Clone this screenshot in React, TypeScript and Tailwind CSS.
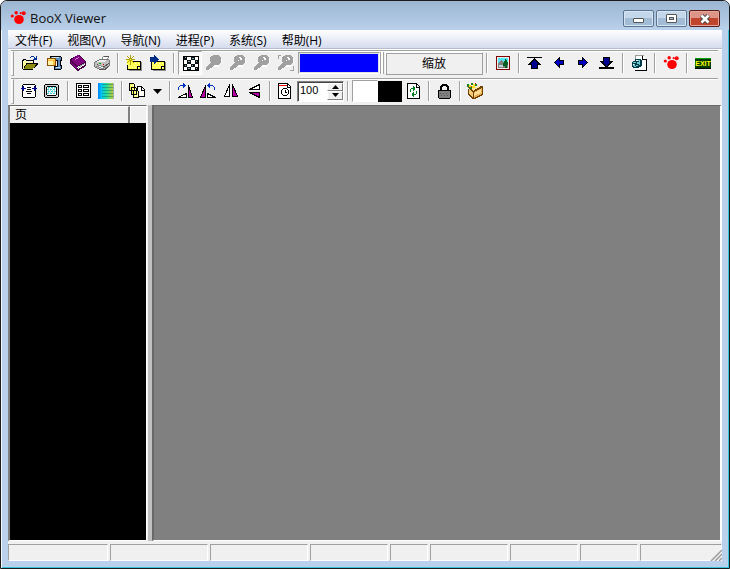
import { useState, type ReactNode } from 'react'

const menus = ['文件(F)', '视图(V)', '导航(N)', '进程(P)', '系统(S)', '帮助(H)']

const statusCells = [
  'w-[100px]',
  'w-[98px]',
  'w-[98px]',
  'w-[78px]',
  'w-[38px]',
  'w-[78px]',
  'w-[68px]',
  'w-[58px]',
  'min-w-0 flex-1',
]

function Icon({ children }: { children: ReactNode }) {
  return (
    <svg viewBox="0 0 16 16" className="block h-4 w-4 shrink-0" shapeRendering="crispEdges" fill="none" aria-hidden="true">
      {children}
    </svg>
  )
}

function Paw() {
  return (
    <Icon>
      <g fill="#f00" shapeRendering="auto">
        <ellipse cx="9" cy="9.5" rx="4.800" ry="4.500" />
        <circle cx="2.300" cy="6" r="1.600" />
        <circle cx="6.200" cy="2.800" r="1.700" />
        <circle cx="10.700" cy="3.200" r="1.100" />
        <circle cx="13.700" cy="3.200" r="2" />
      </g>
    </Icon>
  )
}

function OpenIcon() {
  return (
    <Icon>
      <path fill="#ffff9c" d="M1 6h4v1h6v3h-7l-3 4z" />
      <path fill="#8c8c10" d="M5 9h10l-4 5h-9z" />
      <path stroke="#000" d="M.5 14V5.500h1M1 4.500h3M4 5.500h7.500V8M4 8.500h11.500M1 14.500h10M1.500 13.500l3-4.500M11.500 13.500l4-4.500" />
      <path stroke="#003399" d="M8 2.500h1M9 1.500h3M12 2.500h1M14.500 1v4M11 4.500h4M12 3.500h3" />
    </Icon>
  )
}

function ZipIcon() {
  return (
    <Icon>
      <path fill="#000" d="M4 1h11v1h1v4h-1v4h1v4h-1v1h-7v-4h3v-5h-3v-2h-4z" />
      <path fill="#5c8cc0" d="M5 2h10v3h-1v6h1v3h-6v-2h3v-7h-3v-1h-4z" />
      <path stroke="#c4e0f4" d="M6 2.500h7M10 12.500h4" />
      <path fill="#ffc040" stroke="#885000" d="M1.500 3.500h8v7h-8z" />
      <path fill="#fff4a8" d="M2 6h5v4h-5z" />
      <path fill="#ffdc70" d="M2 4h6v1h-6z" />
    </Icon>
  )
}

function BookIcon() {
  return (
    <Icon>
      <path fill="#480048" d="M8 0h1l7 7v4l-8 5h-1l-7-7v-5z" />
      <path fill="#fff" d="M7 12l8-4v2l-7 4z" />
      <path stroke="#aaa" d="M8 12.500l7-4" />
      <path fill="#800080" d="M8 0l7 7-8 4-6-6z" />
      <path fill="#800080" d="M1 7l6 6v2l-6-6z" />
      <path stroke="#d080d0" d="M5 4.500h1M6 3.500h2M8 2.500h1" />
    </Icon>
  )
}

function PrinterIcon() {
  return (
    <Icon>
      <path fill="#fff" stroke="#888" d="M6.500 6.500l3-5h5l-2 5z" />
      <path fill="#c0c0c0" stroke="#777" d="M.5 7.500l5-3h9l1 1v5l-5 4h-5l-5-3z" />
      <path fill="#eee" d="M2 7h8l3-2h-7z" />
      <path stroke="#555" d="M3 9.500l4 2h3l5-3M5 14.500h6l4-3M10 1.500h5" />
      <path fill="#fff" stroke="#888" d="M3.500 11.500l2-1 5 2-2 1z" />
      <path fill="#0a0" d="M5 8h2v1h-2z" />
      <path fill="#d00" d="M9 9h1v1h-1z" />
    </Icon>
  )
}

function Note() {
  return (
    <>
      <path fill="#909090" d="M15 7h1v9h-13v-1h12z" />
      <path fill="#ffff50" stroke="#000" d="M1.500 6.500h13v8h-13z" />
      <path stroke="#ffffc0" strokeDasharray="1 2" d="M3 8.500h10M2 10.500h10M3 12.500h8" />
      <path fill="#fff" stroke="#000" d="M11.500 13.500v-2h2" />
    </>
  )
}

function NewIcon() {
  return (
    <Icon>
      <Note />
      <path fill="#ffff50" d="M1 5h6v5h-6z" />
      <path stroke="#b0a000" d="M4.500 0v3M4.500 6v4M0 4.500h3M6 4.500h3M1 1.500h1M2 2.500h1M7 1.500h1M6 2.500h1M2 6.500h1M1 7.500h1M6 6.500h1M7 7.500h1" />
      <path fill="#ffff50" stroke="#b0a000" d="M3.500 3.500h2v2h-2z" />
    </Icon>
  )
}

function MoveIcon() {
  return (
    <Icon>
      <Note />
      <path fill="#002c88" d="M0 2h4v-2h1v1h1v1h1v1h1v1h1v1h-1v1h-1v1h-1v1h-1v1h-1v-2h-4z" />
    </Icon>
  )
}

function CheckerIcon() {
  return (
    <Icon>
      <path fill="#fff" stroke="#000" d="M.5 1.500h15v14h-15z" />
      <path
        fill="#101010"
        d="M1 2h3v3h-3zM8 2h4v3h-4zM4 5h4v4h-4zM12 5h3v4h-3zM1 9h3v3h-3zM8 9h4v3h-4zM4 12h4v3h-4zM12 12h3v3h-3z"
      />
      <path fill="#70a8c0" d="M2 2h1v1h-1zM9 3h2v1h-2zM5 6h2v1h-2zM13 6h1v1h-1zM2 10h1v1h-1zM9 10h1v1h-1zM5 13h2v1h-2zM13 13h1v1h-1z" />
    </Icon>
  )
}

function LensIcon({ detail, frame }: { detail?: boolean; frame?: boolean }) {
  return (
    <Icon>
      <path stroke="#fff" strokeWidth="2" d="M15 4v4M8 11h5M5 13l-3 2" />
      <path
        fill="#a0a0a0"
        d="M7 0h6v1h1v1h1v6h-1v1h-1v1h-5v1h-1v1h-1v1h-2v1h-1v1h-3v-3h1v-1h1v-1h1v-1h1v-1h1v-1h-1v-5h1v-1h1z"
      />
      {detail && <path fill="#fff" d="M9 2h2v1h1v2h-2v-2h-1zM8 5h1v1h-1z" />}
      {frame && <path stroke="#a0a0a0" d="M0 .500h3M.5 0v4M15.500 11v5M12 15.500h4" />}
    </Icon>
  )
}

function PictureIcon() {
  return (
    <Icon>
      <path fill="#efefef" stroke="#800000" d="M1.500 1.500h13v13h-13z" />
      <path fill="#50e4f4" d="M3 3h10v5h-10z" />
      <path fill="#808080" d="M3 8l3-3 3 3 4-1v6h-10z" />
      <path fill="#b8d8dc" d="M4 10h4v2h-4z" />
      <path fill="#006020" d="M10 4h1v1h1v2h1v3h-1v3h-2v-2h-2v-3h1v-2h1z" />
    </Icon>
  )
}

function FirstIcon() {
  return (
    <Icon>
      <path fill="#000" d="M0 2h15v1h-15z" />
      <path fill="#000" d="M7 3h1v1h1v1h1v1h1v1h1v1h1v1h1v1h-3v4h-7v-4h-3v-1h1v-1h1v-1h1v-1h1v-1h1v-1h1z" />
      <path fill="#000090" d="M7 5h1v1h1v1h1v1h1v1h-1v4h-5v-4h-1v-1h1v-1h1v-1h1z" />
    </Icon>
  )
}

function LastIcon() {
  return (
    <Icon>
      <path fill="#000" d="M0 12h15v2h-15z" />
      <path fill="#000" d="M4 2h7v4h3v1h-1v1h-1v1h-1v1h-1v1h-1v1h-3v-1h-1v-1h-1v-1h-1v-1h-1v-1h-1v-1h3z" />
      <path fill="#000090" d="M5 3h5v4h1v1h-1v1h-1v1h-1v1h-1v-1h-1v-1h-1v-1h-1v-1h1z" />
    </Icon>
  )
}

function PrevIcon() {
  return (
    <Icon>
      <path fill="#000" d="M3 7h1v-1h1v-1h1v-1h1v-1h1v-1h1v3h4v5h-4v3h-1v-1h-1v-1h-1v-1h-1v-1h-1v-1h-1z" />
      <path fill="#0000c0" d="M4 7h1v-1h1v-1h1v-1h1v2h4v3h-4v2h-1v-1h-1v-1h-1v-1h-1z" />
    </Icon>
  )
}

function NextIcon() {
  return (
    <Icon>
      <path fill="#000" d="M13 7h-1v-1h-1v-1h-1v-1h-1v-1h-1v-1h-1v3h-4v5h4v3h1v-1h1v-1h1v-1h1v-1h1v-1h1z" />
      <path fill="#0000c0" d="M12 7h-1v-1h-1v-1h-1v-1h-1v2h-4v3h4v2h1v-1h1v-1h1v-1h1z" />
    </Icon>
  )
}

function PageOutIcon() {
  return (
    <Icon>
      <path fill="#fff" d="M4 1h8l3 3v11h-11z" />
      <path stroke="#999" d="M4.500 4v-3.500h8" />
      <path stroke="#000" d="M11.500 1v3.500h3.500M15.500 4v11.500h-11.500" />
      <path fill="#003c48" d="M4 4h6v1h1v6h-1v1h-2v1h-6v-1h-1v-5h1v-1h2z" />
      <path fill="#70ccd4" d="M5 5h4v1h-4zM2 7h3v1h-3zM6 7h2v2h-2zM2 9h2v2h-2zM5 10h2v1h-2zM8 6h1v4h-1zM3 11h2v1h-2z" />
      <path fill="#fff" d="M5 5h2v1h-2zM2 9h1v1h-1z" />
    </Icon>
  )
}

function ExitIcon() {
  return (
    <span className="flex h-[11px] w-4 shrink-0 items-center justify-center border-y border-[#00a000] border-b-black bg-[#003c00] font-['Liberation_Sans',sans-serif] text-[7px] leading-[9px] font-bold text-[#ff0]">
      EXIT
    </span>
  )
}

function FitWidthIcon() {
  return (
    <Icon>
      <path fill="#fff" stroke="#000" d="M1.500 2.500l1-1h11l1 1v11l-1 1h-11l-1-1z" />
      <path stroke="#000" d="M6 4.500h4M6 6.500h4M5 8.500h6M6 10.500h4" />
      <path fill="#fff" d="M2 3h2v5h-2zM12 3h2v5h-2z" />
      <path fill="#000090" d="M0 5h1v-1h1v-1h1v2h2v1h-2v2h-1v-1h-1v-1h-1zM16 5h-1v-1h-1v-1h-1v2h-2v1h2v2h1v-1h1v-1h1z" />
    </Icon>
  )
}

function FitPageIcon() {
  return (
    <Icon>
      <path fill="#d0d0d0" stroke="#000" d="M.5 2.500l1-1h12l1 1v11l-1 1h-12l-1-1z" />
      <path fill="#fff" stroke="#000" d="M2.500 4.500l1-1h8l1 1v7l-1 1h-8l-1-1z" />
      <path stroke="#40c8d0" strokeDasharray="2 1" d="M4 4.500h8M3 6.500h9M4 8.500h8M3 10.500h9" />
      <path stroke="#a0e4e8" strokeDasharray="1 1" d="M4 5.500h8M4 7.500h8M4 9.500h8" />
    </Icon>
  )
}

function DetailsIcon() {
  return (
    <Icon>
      <path fill="#fff" stroke="#000" d="M1.500 .500h14v14h-14z" />
      <path stroke="#000" d="M3.500 2.500h3v2h-3zM3.500 6.500h3v2h-3zM3.500 10.500h3v2h-3zM8.500 2.500h5v2h-5zM8.500 6.500h5v2h-5zM8.500 10.500h5v2h-5z" />
    </Icon>
  )
}

function GradientIcon() {
  return (
    <Icon>
      <defs>
        <linearGradient id="bands">
          <stop offset="0" stopColor="#0080ff" />
          <stop offset=".25" stopColor="#00c8f0" />
          <stop offset=".6" stopColor="#30e090" />
          <stop offset="1" stopColor="#c8c838" />
        </linearGradient>
      </defs>
      <path fill="url(#bands)" d="M0 0h15v16h-15z" />
      <path stroke="#006060" strokeOpacity=".4" d="M4 1.500h12M4 4.500h12M4 7.500h12M4 10.500h12M4 13.500h12M15.500 0v16" />
    </Icon>
  )
}

function PagesIcon() {
  return (
    <Icon>
      <path fill="#fff" stroke="#000" d="M8.500 3.500h4l3 3v7h-7z" />
      <path stroke="#000" d="M12.500 4v3h3" />
      <path fill="#ffff60" stroke="#000" d="M.5 .500h4l1 1v6h-5zM2.500 4.500h4l1 1v6h-5zM4.500 7.500h4l1 1v6h-5z" />
      <path stroke="#fff" strokeDasharray="1 1" d="M2 2.500h3M4 6.500h3M6 9.500h3M6 12.500h3" />
    </Icon>
  )
}

function RotateRightIcon() {
  return (
    <Icon>
      <path fill="#fff" stroke="#000" d="M1 14.500h8.500V10.500z" />
      <path fill="#b800a8" stroke="#000" d="M11.500 2.500v12h4z" />
      <path stroke="#0030c0" d="M1.500 7v-3M2 3.500h1M3 2.500h4M6.500 0v5M7.500 1v3M8.500 2v1" />
    </Icon>
  )
}

function RotateLeftIcon() {
  return (
    <Icon>
      <path fill="#b800a8" stroke="#000" d="M5.500 2.500v12h-5z" />
      <path fill="#fff" stroke="#000" d="M7.500 10.500v4h8z" />
      <path stroke="#0030c0" d="M14.500 7v-3M13 3.500h1M9 2.500h4M9.500 0v5M8.500 1v3M7.500 2v1" />
    </Icon>
  )
}

function FlipHIcon() {
  return (
    <Icon>
      <path fill="#fff" stroke="#000" d="M6.500 1.500v12h-5z" />
      <path fill="#b800a8" stroke="#000" d="M9.500 1.500v12h5z" />
    </Icon>
  )
}

function FlipVIcon() {
  return (
    <Icon>
      <path fill="#fff" stroke="#000" d="M13.500 1.500v5h-10z" />
      <path fill="#b800a8" stroke="#000" d="M3.500 9.500h10v5z" />
    </Icon>
  )
}

function TimerIcon() {
  return (
    <Icon>
      <path fill="#fff" stroke="#000" d="M1.500 .500h9l3 3v12h-12z" />
      <path stroke="#f00" d="M2 2.500h8" />
      <path stroke="#000" d="M10.500 1v3h3M6 5.500h4M10 6.500h1M11.500 7v4M10 11.500h1M6 12.500h4M5 11.500h1M4.500 7v4M5 6.500h1M8.500 7v3M8 9.500h2" />
    </Icon>
  )
}

function RefreshIcon() {
  return (
    <Icon>
      <path fill="#fff" stroke="#000" d="M2.500 .500h9l3 3v12h-12z" />
      <path stroke="#000" d="M11.500 1v3h3" />
      <path stroke="#008020" d="M5.500 9v-3M6 5.500h3M8.500 3v5M9.500 4v3M11.500 8v3M8 11.500h3M8.500 9v5M7.500 10v3" />
    </Icon>
  )
}

function LockIcon() {
  return (
    <Icon>
      <path stroke="#000" strokeWidth="2" d="M5 8v-4l1.500-2h4l1.500 2v4" />
      <path fill="#808080" stroke="#000" d="M2.500 7.500h12v7l-1 1h-10l-1-1z" />
      <path stroke="#555" strokeDasharray="1 2" d="M4 10.500h9M5 12.500h8" />
    </Icon>
  )
}

function BoxIcon() {
  return (
    <Icon>
      <path fill="#704000" d="M2 5h4l7-2h2l1 1v7l-2 2-6 3h-3l-4-4v-6z" />
      <path fill="#f4cc78" d="M2 6l4 4v5l-4-4z" />
      <path fill="#ffe4a0" d="M4 6l8-3h2l-8 5z" />
      <path fill="#e8b050" d="M7 9l8-4v5l-2 2-6 3z" />
      <path fill="#ffdc98" d="M7 10l7-4v4l-7 3z" />
      <path fill="#208020" d="M0 1h2v3h-2zM4 0h2v2h-2zM8 1h2v2h-2zM2 4h3v2h-3z" />
      <path fill="#ffe020" d="M2 2h2v2h-2zM6 1h2v2h-2zM5 3h3v2h-3z" />
      <path fill="#e02010" d="M1 4h1v1h-1zM4 3h1v1h-1zM8 0h1v1h-1z" />
    </Icon>
  )
}

function ToolButton({ label, children, pressed, compact }: { label: string; children: ReactNode; pressed?: boolean; compact?: boolean }) {
  const size = compact ? 'w-[23px] pl-[3px]' : 'w-6 pl-1'
  const edge = pressed ? 'border border-[#a0a0a0] border-r-white border-b-white bg-[#f7f7f7]' : ''
  return (
    <button type="button" aria-label={label} title={label} className={`flex h-6 shrink-0 items-center ${size} ${edge}`}>
      {children}
    </button>
  )
}

function Separator() {
  return (
    <div className="flex w-2 shrink-0 justify-center">
      <div className="h-5 w-[2px] border-r border-l border-r-white border-l-[#a0a0a0]" />
    </div>
  )
}

function Grip() {
  return <div className="mr-1 h-[25px] w-[3px] shrink-0 border border-t-white border-r-[#a0a0a0] border-b-[#a0a0a0] border-l-white" />
}

function TitleBar() {
  return (
    <header className="flex h-[29px] shrink-0 items-start justify-between bg-linear-to-b from-[#9cb5d1] to-[#b9d1ea] pl-[9px]">
      <div className="flex items-center gap-1 pt-[9px]">
        <Paw />
        <h1 className="text-[13px] leading-4 text-[#111]">BooX Viewer</h1>
      </div>
      <div className="mt-[9px] mr-[9px] flex gap-[2px]">
        <button type="button" aria-label="Minimize" className="flex h-[17px] w-[31px] items-center justify-center rounded-[2px] border border-[#5a7390] bg-linear-to-b from-[#c3d6ea] from-50% to-[#a3bcd6] to-50% shadow-[inset_0_0_0_1px_#d8e6f4]">
          <span className="mt-1 h-[5px] w-[11px] rounded-[1px] border border-[#555] bg-white" />
        </button>
        <button type="button" aria-label="Maximize" className="flex h-[17px] w-[31px] items-center justify-center rounded-[2px] border border-[#5a7390] bg-linear-to-b from-[#c3d6ea] from-50% to-[#a3bcd6] to-50% shadow-[inset_0_0_0_1px_#d8e6f4]">
          <span className="flex h-[9px] w-[11px] items-center justify-center rounded-[1px] border border-[#555] bg-white">
            <span className="h-[3px] w-[5px] border border-[#555] bg-[#a3bcd6]" />
          </span>
        </button>
        <button type="button" aria-label="Close" className="flex h-[17px] w-[31px] items-center justify-center rounded-[2px] border border-[#5b1d17] bg-linear-to-b from-[#dd9587] from-50% to-[#c0452c] to-50% shadow-[inset_0_0_0_1px_#e5a79b]">
          <svg viewBox="0 0 12 10" className="h-[10px] w-3" aria-hidden="true">
            <path stroke="#444" strokeWidth="4.500" d="M2.500 1.500l7 7M9.500 1.500l-7 7" />
            <path stroke="#fff" strokeWidth="2.600" d="M2.500 1.500l7 7M9.500 1.500l-7 7" />
          </svg>
        </button>
      </div>
    </header>
  )
}

function MainToolbar() {
  return (
    <div role="toolbar" aria-label="Main" className="flex h-[27px] items-start overflow-hidden">
      <Grip />
      <div className="flex min-w-0 flex-1 items-center shadow-[inset_0_1px_0_#fff]">
        <ToolButton label="Open"><OpenIcon /></ToolButton>
        <ToolButton label="Archive"><ZipIcon /></ToolButton>
        <ToolButton label="Book"><BookIcon /></ToolButton>
        <ToolButton label="Print"><PrinterIcon /></ToolButton>
        <Separator />
        <ToolButton label="New note"><NewIcon /></ToolButton>
        <ToolButton label="Go to note"><MoveIcon /></ToolButton>
        <Separator />
        <ToolButton label="Background" pressed><CheckerIcon /></ToolButton>
        <ToolButton label="Lens"><LensIcon /></ToolButton>
        <ToolButton label="Zoom in"><LensIcon detail /></ToolButton>
        <ToolButton label="Zoom out"><LensIcon detail /></ToolButton>
        <ToolButton label="Zoom area"><LensIcon detail frame /></ToolButton>
        <button type="button" aria-label="Colour" className="h-[22px] w-[82px] shrink-0 border border-[#a0a0a0] border-r-white border-b-white bg-[#00f] shadow-[inset_0_0_0_1px_#e0e0e0]" />
        <div className="mr-[1px] h-[22px] w-1 shrink-0 border-r border-l border-[#a0a0a0] bg-white" />
        <button type="button" className="h-[23px] w-[98px] shrink-0 border border-[#a0a0a0] border-t-white border-l-white pt-[2px] text-[12px] leading-4 shadow-[inset_1px_1px_0_#a0a0a0]">
          缩放
        </button>
        <Separator />
        <ToolButton label="Picture"><PictureIcon /></ToolButton>
        <Separator />
        <ToolButton label="First page"><FirstIcon /></ToolButton>
        <ToolButton label="Previous page"><PrevIcon /></ToolButton>
        <ToolButton label="Next page"><NextIcon /></ToolButton>
        <ToolButton label="Last page"><LastIcon /></ToolButton>
        <Separator />
        <ToolButton label="Export page"><PageOutIcon /></ToolButton>
        <Separator />
        <ToolButton label="About"><Paw /></ToolButton>
        <Separator />
        <ToolButton label="Exit"><ExitIcon /></ToolButton>
      </div>
    </div>
  )
}

function ViewToolbar() {
  const [delay, setDelay] = useState(100)

  return (
    <div role="toolbar" aria-label="View" className="flex h-[26px] items-start">
      <Grip />
      <div className="flex min-w-0 flex-1 items-center shadow-[inset_0_1px_0_#fff]">
        <ToolButton label="Fit width" compact><FitWidthIcon /></ToolButton>
        <ToolButton label="Fit page" compact><FitPageIcon /></ToolButton>
        <Separator />
        <ToolButton label="Details" compact><DetailsIcon /></ToolButton>
        <ToolButton label="Gradient" compact><GradientIcon /></ToolButton>
        <Separator />
        <ToolButton label="Pages" compact><PagesIcon /></ToolButton>
        <button type="button" aria-label="More pages" className="flex h-6 w-[17px] shrink-0 items-center justify-center">
          <svg viewBox="0 0 9 5" className="h-[5px] w-[9px]" aria-hidden="true">
            <path d="M0 0h9l-4.500 5z" />
          </svg>
        </button>
        <Separator />
        <ToolButton label="Rotate right" compact><RotateRightIcon /></ToolButton>
        <ToolButton label="Rotate left" compact><RotateLeftIcon /></ToolButton>
        <ToolButton label="Flip horizontal" compact><FlipHIcon /></ToolButton>
        <ToolButton label="Flip vertical" compact><FlipVIcon /></ToolButton>
        <Separator />
        <ToolButton label="Timer" compact><TimerIcon /></ToolButton>
        <div className="flex h-[21px] w-[47px] shrink-0 border border-[#808080] border-r-white border-b-white bg-white shadow-[inset_1px_1px_0_#444]">
          <input
            aria-label="Delay"
            value={delay}
            onChange={(e) => setDelay(Number(e.target.value) || 0)}
            className="h-4 w-[29px] min-w-0 bg-transparent pl-[2px] font-['Liberation_Sans',sans-serif] text-[11px] leading-4 outline-none"
          />
          <div className="flex flex-1 flex-col py-[1px]">
            <button type="button" aria-label="Increase" onClick={() => setDelay(delay + 1)} className="flex flex-1 items-center justify-center border border-white border-r-[#808080] border-b-[#808080] bg-[#f0f0f0]">
              <svg viewBox="0 0 7 4" className="h-1 w-[7px]" aria-hidden="true"><path d="M0 4h7l-3.500-4z" /></svg>
            </button>
            <button type="button" aria-label="Decrease" onClick={() => setDelay(delay - 1)} className="flex flex-1 items-center justify-center border border-white border-r-[#808080] border-b-[#808080] bg-[#f0f0f0]">
              <svg viewBox="0 0 7 4" className="h-1 w-[7px]" aria-hidden="true"><path d="M0 0h7l-3.500 4z" /></svg>
            </button>
          </div>
        </div>
        <Separator />
        <button type="button" aria-label="Foreground" className="h-[22px] w-[26px] shrink-0 border border-[#a0a0a0] border-r-white border-b-white bg-white" />
        <button type="button" aria-label="Background" className="h-[21px] w-6 shrink-0 bg-black" />
        <ToolButton label="Refresh" compact><RefreshIcon /></ToolButton>
        <Separator />
        <ToolButton label="Lock" compact><LockIcon /></ToolButton>
        <Separator />
        <ToolButton label="Pack" compact><BoxIcon /></ToolButton>
      </div>
    </div>
  )
}

export default function App() {
  return (
    <div className="h-screen bg-white">
      <div className="flex h-full flex-col overflow-hidden rounded-t-[7px] border border-[#1c1c1c] bg-[#b9d1ea] font-['Open_Sans','Noto_Sans_CJK_SC',sans-serif] text-black shadow-[inset_1px_1px_0_#f4f8fc,inset_-1px_-1px_0_#38c4dc]">
        <TitleBar />
        <div className="mx-[7px] mb-[7px] flex min-h-0 flex-1 flex-col bg-[#f0f0f0]">
          <nav className="flex h-[19px] shrink-0 items-center gap-[1px] border-b border-[#b6bccc] bg-linear-to-b from-white to-[#d5dcee] pt-[3px]">
            {menus.map((menu) => (
              <button type="button" key={menu} className="px-[7px] text-[12px] leading-4">
                {menu}
              </button>
            ))}
          </nav>

          <div className="shrink-0 border-t border-white pr-1 pl-[3px]">
            <div className="border-t border-[#a0a0a0]"><MainToolbar /></div>
            <div className="border-t border-[#a0a0a0]"><ViewToolbar /></div>
          </div>

          <main className="flex min-h-0 flex-1">
            <section className="flex w-[139px] shrink-0 flex-col border border-l-2 border-r-white border-b-white border-t-[#696969] border-l-[#808080] bg-black">
              <div className="flex h-[17px] shrink-0 bg-[#f0f0f0] text-[12px] leading-4">
                <div className="w-[120px] border-t border-r-2 border-t-white border-r-[#808080] pl-[5px] leading-4">页</div>
                <div className="flex-1 border-t border-l border-white" />
              </div>
            </section>
            <div className="w-[5px] shrink-0 border-l border-[#f0f0f0] bg-[#c0c0c0]" />
            <section className="min-w-0 flex-1 border border-r-2 border-l-2 border-t-[#696969] border-r-white border-b-white border-l-[#696969] bg-[#808080]" />
          </main>

          <footer className="relative flex h-5 shrink-0 gap-[2px] pt-[3px]">
            {statusCells.map((width, i) => (
              <div key={i} className={`${width} border border-[#a0a0a0] border-r-white border-b-white`} />
            ))}
            <svg viewBox="0 0 12 12" className="absolute right-0 bottom-0 h-3 w-3" aria-hidden="true">
              <path stroke="#fff" d="M0 12L12 0M4 12l8-8M8 12l4-4" />
              <path stroke="#999" strokeWidth="1.500" d="M1 12L12 1M5 12l7-7M9 12l3-3" />
            </svg>
          </footer>
        </div>
      </div>
    </div>
  )
}
